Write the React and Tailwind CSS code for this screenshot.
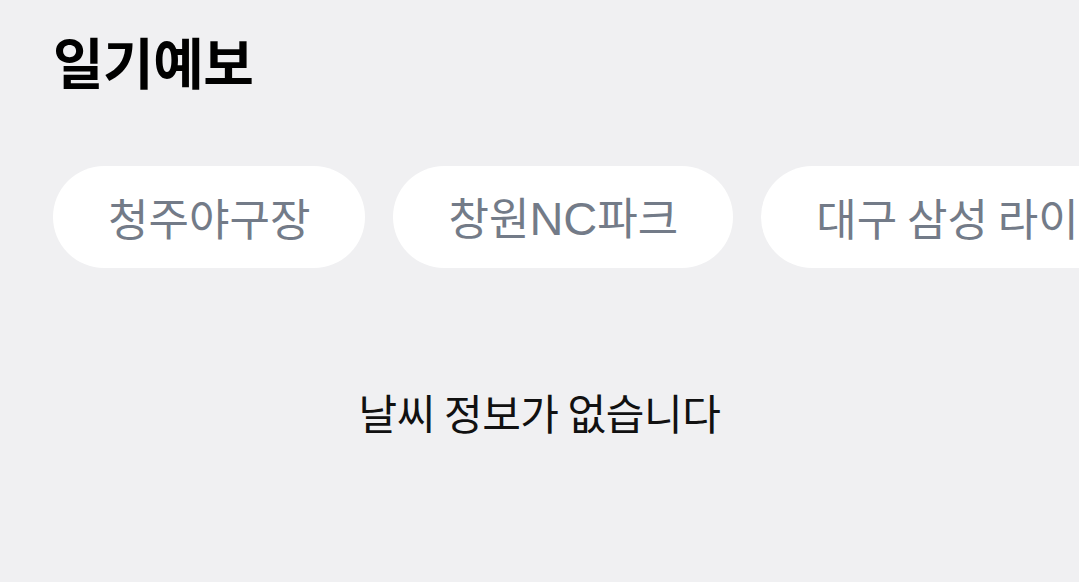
export default function App() {
  const stadiums = [
    <>청주야구장</>,
    <>
      창원<span className="font-['Liberation_Sans'] text-[47px]">NC</span>파크
    </>,
    <>대구 삼성 라이온즈 파크</>,
    <>잠실야구장</>,
  ];
  return (
    <div
      className="w-[1079px] h-[582px] overflow-hidden bg-[#f0f0f2]"
      style={{ fontFamily: '"Noto Sans CJK KR", "Noto Sans", sans-serif' }}
    >
      <h1 className="pl-[53px] pt-[24px] text-[55px] leading-[72px] font-bold text-black tracking-[-0.5px]">
        일기예보
      </h1>
      <div className="mt-[70px] flex gap-[28px] pl-[53px] overflow-hidden">
        {stadiums.map((s, i) => (
          <div
            key={i}
            className="shrink-0 h-[102px] px-[55px] rounded-full bg-white flex items-center text-[44px] leading-[60px] text-[#737b88] whitespace-nowrap"
          >
            <span>{s}</span>
          </div>
        ))}
      </div>
      <div className="mt-[114px] text-center text-[42px] leading-[60px] text-[#111111] tracking-[-0.4px]">
        날씨 정보가 없습니다
      </div>
    </div>
  );
}
